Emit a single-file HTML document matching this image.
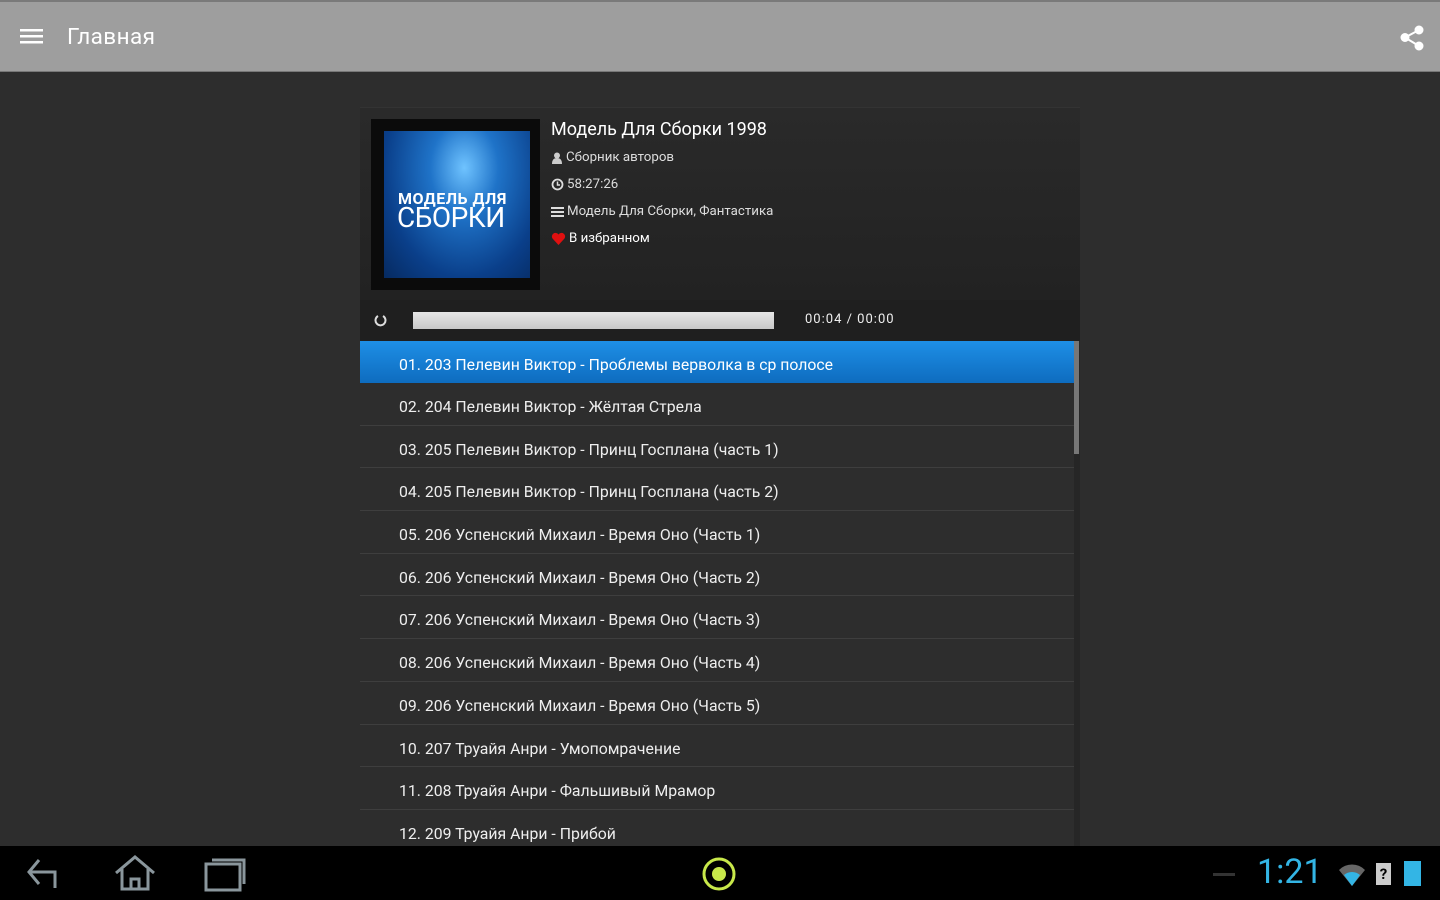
<!DOCTYPE html>
<html><head><meta charset="utf-8"><style>
*{margin:0;padding:0;box-sizing:border-box}
body{width:1440px;height:900px;background:#2d2d2d;font-family:"Roboto","Liberation Sans","Noto Sans CJK SC",sans-serif;overflow:hidden;position:relative;color:#fff}
.top{position:absolute;left:0;top:0;width:1440px;height:72px;background:#9e9e9e;border-top:2px solid #7a7a7a;border-bottom:1px solid #777}
.title{position:absolute;left:67px;top:22px;font-size:22.5px;color:#fff;letter-spacing:.4px}
.card{position:absolute;left:360px;top:107px;width:720px;height:193px;background:linear-gradient(#2a2a2a,#222);border-top:1px solid #333}
.frame{position:absolute;left:11px;top:11px;width:169px;height:171px;background:#0b0b0b}
.cover{position:absolute;left:13px;top:12px;width:146px;height:147px;background:radial-gradient(ellipse at 55% 25%,#6fc3ff 0%,#1f73c8 30%,#0a3f8a 70%,#062a60 100%);overflow:hidden}
.cover .t1{position:absolute;left:14px;top:58px;font-size:16px;font-weight:bold;letter-spacing:.5px}
.cover .t2{position:absolute;left:13px;top:70px;font-size:28px;letter-spacing:-.5px}
.info{position:absolute;left:191px;top:11px;font-size:13.3px;color:#ddd}
.info .h{font-size:18px;color:#fff;margin-bottom:4px}
.info div.l{height:27px;display:flex;align-items:center;gap:3px}
.ctrl{position:absolute;left:360px;top:300px;width:720px;height:41px;background:#1f1f1f}
.bar{position:absolute;left:53px;top:12px;width:361px;height:17px;background:linear-gradient(#e6e6e6,#c8c8c8)}
.time{position:absolute;left:445px;top:12px;font-size:13px;color:#eee;letter-spacing:1px}
.list{position:absolute;left:360px;top:341px;width:714px}
.row{height:42.7px;border-bottom:1px solid #3e3e3e;background:#2d2d2d;font-size:15.8px;color:#eee;padding-left:39px;line-height:47px}
.row.sel{background:linear-gradient(#1e8fe6,#0e6cbf);color:#fff;height:42px;border-bottom:none}
.sb{position:absolute;left:1074px;top:341px;width:6px;height:505px;background:#262626}
.sb div{width:5px;height:113px;background:#777}
.nav{position:absolute;left:0;top:846px;width:1440px;height:54px;background:#000}
</style></head><body>
<div class="top">
<svg style="position:absolute;left:20px;top:26px" width="24" height="18"><g fill="#fff"><rect y="1" width="23" height="2.5"/><rect y="7" width="23" height="2.5"/><rect y="13" width="23" height="2.5"/></g></svg>
<div class="title">Главная</div>
<svg style="position:absolute;left:1400px;top:23px" width="26" height="26"><g fill="#fff" stroke="#fff" stroke-width="2"><line x1="5" y1="12.5" x2="19" y2="5"/><line x1="5" y1="12.5" x2="19" y2="21"/><circle cx="5" cy="12.5" r="3.5"/><circle cx="19" cy="5" r="3.5"/><circle cx="19" cy="21" r="3.5"/></g></svg>
</div>
<div class="card">
<div class="frame"><div class="cover"><div class="t1">МОДЕЛЬ ДЛЯ</div><div class="t2">СБОРКИ</div></div></div>
<div class="info">
<div class="h">Модель Для Сборки 1998</div>
<div class="l"><svg width="12" height="12"><circle cx="6" cy="3.5" r="3" fill="#ccc"/><path d="M1 12 Q1 6 6 6 Q11 6 11 12Z" fill="#ccc"/></svg>Сборник авторов</div>
<div class="l"><svg width="13" height="13"><circle cx="6.5" cy="6.5" r="5" stroke="#ddd" stroke-width="1.8" fill="none"/><path d="M6.5 3.5V7H9" stroke="#ddd" stroke-width="1.5" fill="none"/></svg>58:27:26</div>
<div class="l"><svg width="13" height="12"><g fill="#ddd"><rect y="1" width="13" height="2"/><rect y="5" width="13" height="2"/><rect y="9" width="13" height="2"/></g></svg>Модель Для Сборки, Фантастика</div>
<div class="l" style="color:#fff"><svg width="15" height="13"><path d="M7.5 13 L1.5 6.5 A3.3 3.3 0 0 1 7.5 2.5 A3.3 3.3 0 0 1 13.5 6.5Z" fill="#e01010"/></svg>В избранном</div>
</div>
</div>
<div class="ctrl">
<svg style="position:absolute;left:13px;top:13px" width="15" height="15"><path d="M5 3 A5 5 0 1 0 10 3" stroke="#ddd" stroke-width="2" fill="none"/></svg>
<div class="bar"></div>
<div class="time">00:04 / 00:00</div>
</div>
<div class="list">
<div class="row sel">01. 203 Пелевин Виктор - Проблемы верволка в ср полосе</div>
<div class="row">02. 204 Пелевин Виктор - Жёлтая Стрела</div>
<div class="row">03. 205 Пелевин Виктор - Принц Госплана (часть 1)</div>
<div class="row">04. 205 Пелевин Виктор - Принц Госплана (часть 2)</div>
<div class="row">05. 206 Успенский Михаил - Время Оно (Часть 1)</div>
<div class="row">06. 206 Успенский Михаил - Время Оно (Часть 2)</div>
<div class="row">07. 206 Успенский Михаил - Время Оно (Часть 3)</div>
<div class="row">08. 206 Успенский Михаил - Время Оно (Часть 4)</div>
<div class="row">09. 206 Успенский Михаил - Время Оно (Часть 5)</div>
<div class="row">10. 207 Труайя Анри - Умопомрачение</div>
<div class="row">11. 208 Труайя Анри - Фальшивый Мрамор</div>
<div class="row">12. 209 Труайя Анри - Прибой</div>
</div>
<div class="sb"><div></div></div>
<div class="nav">
<svg style="position:absolute;left:25px;top:10px" width="40" height="34"><path d="M14 4 L4 16 L14 28 M4 16 H30 V32" stroke="#8a969c" stroke-width="3" fill="none"/></svg>
<svg style="position:absolute;left:112px;top:8px" width="46" height="38"><path d="M4 19 L23 3 L42 19 M10 15 V35 H36 V15 M19 35 V25 H27 V35" stroke="#8a969c" stroke-width="3" fill="none"/></svg>
<svg style="position:absolute;left:203px;top:10px" width="44" height="36"><rect x="3" y="8" width="34" height="26" stroke="#8a969c" stroke-width="3" fill="none"/><path d="M9 4 H41 V28" stroke="#8a969c" stroke-width="3" fill="none"/></svg>
<svg style="position:absolute;left:700px;top:10px" width="38" height="36"><circle cx="19" cy="18" r="15" stroke="#c8e84a" stroke-width="3" fill="none"/><circle cx="19" cy="18" r="7" fill="#c8e84a"/></svg>
<div style="position:absolute;left:1213px;top:27px;width:22px;height:3px;background:#333"></div>
<div style="position:absolute;left:1257px;top:6px;font-size:34px;color:#33b5e5">1:21</div>
<svg style="position:absolute;left:1337px;top:14px" width="30" height="28"><path d="M2 10 A18 18 0 0 1 28 10 L15 26Z" fill="#666"/><path d="M7 15 A12 12 0 0 1 23 15 L15 26Z" fill="#33b5e5"/></svg>
<div style="position:absolute;left:1376px;top:17px;width:15px;height:22px;background:#ccc;color:#000;font-size:15px;font-weight:bold;text-align:center;line-height:22px">?</div>
<div style="position:absolute;left:1404px;top:15px;width:17px;height:25px;background:#33b5e5"></div>
</div>
</body></html>
